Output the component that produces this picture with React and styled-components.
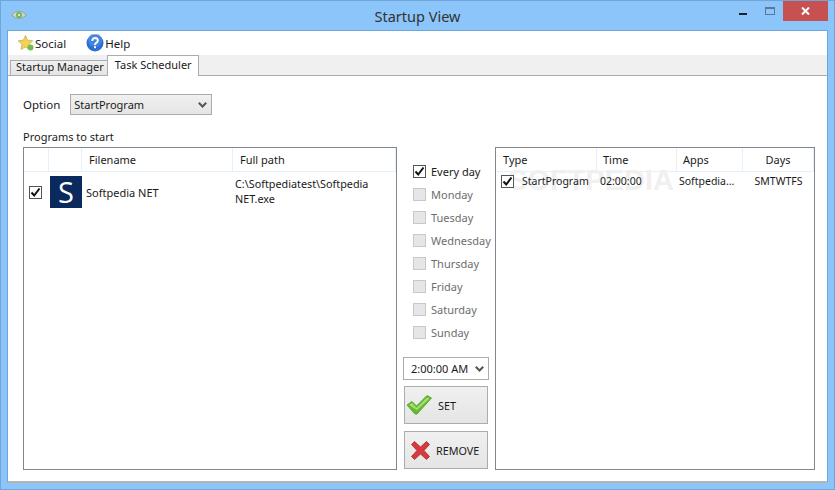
import { createGlobalStyle, styled } from "styled-components";

const GlobalStyle = createGlobalStyle`
	html, body {
		margin: 0;
		padding: 0;
		width: 835px;
		height: 490px;
		overflow: hidden;
		font-family: "Noto Sans", "Open Sans", sans-serif;
		font-size: 11.5px;
		color: #1a1a1a;
	}
`;

const Window = styled.div`
	box-sizing: border-box;
	width: 835px;
	height: 490px;
	display: flex;
	flex-direction: column;
	background: #8cc5f9;
	border: 1px solid #6fa5d8;
	padding: 0 6px 6px 6px;
`;

const TitleBar = styled.div`
	height: 29px;
	flex: none;
	display: flex;
	align-items: center;
	position: relative;
`;

const TitleText = styled.div`
	flex: 1;
	text-align: center;
	font-size: 14.5px;
	color: #333;
`;

const AppIcon = styled.svg`
	position: absolute;
	left: 4px;
	top: 8px;
`;

const WindowButtons = styled.div`
	position: absolute;
	right: 0;
	top: 0;
	display: flex;
	align-items: flex-start;
`;

const MinButton = styled.div`
	width: 8px;
	height: 2px;
	background: #222;
	margin: 12px 18px 0 0;
`;

const MaxButton = styled.div`
	box-sizing: border-box;
	width: 10px;
	height: 8px;
	border: 1px solid #5a7896;
	border-top-width: 2px;
	margin: 6px 8px 0 0;
`;

const CloseButton = styled.div`
	width: 45px;
	height: 20px;
	background: #c75050;
	display: flex;
	align-items: center;
	justify-content: center;
`;

const Client = styled.div`
	flex: 1;
	display: flex;
	flex-direction: column;
	background: #fff;
	border: 1px solid #6fa5d8;
	border-bottom: 2px solid #b5b5b5;
	min-height: 0;
`;

const MenuBar = styled.div`
	height: 24px;
	flex: none;
	display: flex;
	align-items: center;
	padding-left: 10px;
	gap: 20px;
	font-size: 11.5px;
`;

const MenuItem = styled.div`
	display: flex;
	align-items: center;
	gap: 1px;
`;

const TabStrip = styled.div`
	height: 21px;
	flex: none;
	display: flex;
	align-items: flex-end;
	background: #f0f0f0;
	padding-left: 2px;
	border-bottom: 1px solid #acacac;
	box-sizing: border-box;
`;

const Tab = styled.div`
	box-sizing: border-box;
	border: 1px solid #acacac;
	white-space: nowrap;
	font-size: 11px;
	margin-bottom: ${(p) => (p.$active ? "-1px" : "0")};
	height: ${(p) => (p.$active ? "21px" : "15px")};
	line-height: ${(p) => (p.$active ? "18px" : "12px")};
	padding: ${(p) => (p.$active ? "0 6px 0 7px" : "0 5px")};
	background: ${(p) => (p.$active ? "#fff" : "linear-gradient(#f0f0f0, #e5e5e5)")};
	border-bottom: none;
	margin-left: ${(p) => (p.$active ? "-3px" : "0")};
`;

const Page = styled.div`
	flex: 1;
	min-height: 0;
	display: flex;
	flex-direction: column;
	padding: 18px 11px 11px 15px;
`;

const OptionRow = styled.div`
	display: flex;
	align-items: center;
	gap: 10px;
	height: 21px;
`;

const Select = styled.div`
	box-sizing: border-box;
	display: flex;
	align-items: center;
	justify-content: space-between;
	width: ${(p) => p.$width}px;
	height: ${(p) => p.$height}px;
	border: 1px solid #acacac;
	background: ${(p) => (p.$plain ? "#fff" : "linear-gradient(#f0f0f0, #e5e5e5)")};
	padding: 0 4px 0 ${(p) => (p.$plain ? "7px" : "3px")};
	font-size: 11px;
`;

const SectionLabel = styled.div`
	margin-top: 14px;
	height: 16px;
	line-height: 16px;
	font-size: 11px;
`;

const Columns = styled.div`
	flex: 1;
	min-height: 0;
	display: flex;
	margin-top: 2px;
`;

const ListPanel = styled.div`
	box-sizing: border-box;
	width: ${(p) => p.$width}px;
	flex: none;
	border: 1px solid #828790;
	position: relative;
	overflow: hidden;
`;

const ListHeader = styled.div`
	display: flex;
	height: 24px;
	border-bottom: 1px solid #e5f0fa;
	box-sizing: border-box;
`;

const HeaderCell = styled.div`
	box-sizing: border-box;
	width: ${(p) => p.$width}px;
	flex: none;
	display: flex;
	align-items: center;
	justify-content: ${(p) => (p.$center ? "center" : "flex-start")};
	padding-left: ${(p) => p.$pad || 0}px;
	border-right: 1px solid #e5f0fa;
	font-size: 11px;
`;

const ProgramRow = styled.div`
	display: flex;
	height: 44px;
`;

const CheckCell = styled.div`
	width: 23px;
	flex: none;
	display: flex;
	align-items: flex-start;
	justify-content: center;
	padding-top: 14px;
	box-sizing: border-box;
`;

const Logo = styled.div`
	width: 32px;
	height: 32px;
	margin-top: 4px;
	margin-left: 3px;
	flex: none;
	background: #0a2a5e;
	color: #fff;
	display: flex;
	align-items: center;
	justify-content: center;
	font-family: "Open Sans", sans-serif;
	font-size: 29px;
	line-height: 32px;
`;

const ProgramName = styled.div`
	width: 153px;
	flex: none;
	padding: 13px 0 0 4px;
	box-sizing: border-box;
	font-size: 11px;
`;

const ProgramPath = styled.div`
	padding-top: 4px;
	font-size: 10.8px;
	line-height: 15px;
	width: 150px;
`;

const DayColumn = styled.div`
	width: 98px;
	flex: none;
	display: flex;
	flex-direction: column;
	align-items: flex-start;
	padding: 13px 0 0 6px;
	box-sizing: border-box;
`;

const DayRow = styled.div`
	display: flex;
	align-items: center;
	gap: 5px;
	height: 23px;
	margin-left: 10px;
	white-space: nowrap;
	font-size: 11px;
	color: ${(p) => (p.$disabled ? "#6d6d6d" : "#1a1a1a")};
`;

const Box = styled.div`
	box-sizing: border-box;
	width: 13px;
	height: 13px;
	flex: none;
	border: 1px solid ${(p) => (p.$disabled ? "#c8c8c8" : "#555")};
	background: ${(p) => (p.$disabled ? "#e6e6e6" : "#fff")};
	display: flex;
	align-items: center;
	justify-content: center;
`;

const TimeSelectWrap = styled.div`
	margin-top: 13px;
`;

const ActionButton = styled.div`
	box-sizing: border-box;
	width: 84px;
	height: 38px;
	margin: ${(p) => p.$top}px 0 0 1px;
	border: 1px solid #acacac;
	background: linear-gradient(#f0f0f0, #e5e5e5);
	display: flex;
	align-items: center;
	font-size: 10.8px;
	gap: ${(p) => p.$gap}px;
	padding-left: ${(p) => p.$pad}px;
`;

const Watermark = styled.div`
	position: absolute;
	left: 12px;
	top: 16px;
	font-size: 29px;
	font-weight: 700;
	color: #f0f0f0;
	font-family: "Liberation Sans", sans-serif;
`;

const TaskRow = styled.div`
	display: flex;
	height: 18px;
	align-items: center;
	position: relative;
	font-size: 10.5px;
`;

const TaskCell = styled.div`
	box-sizing: border-box;
	width: ${(p) => p.$width}px;
	flex: none;
	display: flex;
	align-items: center;
	gap: 8px;
	white-space: nowrap;
	justify-content: ${(p) => (p.$center ? "center" : "flex-start")};
	padding-left: ${(p) => p.$pad || 0}px;
`;

const Check = () => (
	<svg width="11" height="11" viewBox="0 0 11 11">
		<path d="M1.5 5.5 L4.2 8.5 L9.5 1.5" fill="none" stroke="#111" strokeWidth="2" />
	</svg>
);

const Chevron = () => (
	<svg width="9" height="6" viewBox="0 0 9 6">
		<path d="M0.8 0.8 L4.5 4.5 L8.2 0.8" fill="none" stroke="#555" strokeWidth="2" />
	</svg>
);

const days = ["Monday", "Tuesday", "Wednesday", "Thursday", "Friday", "Saturday", "Sunday"];

export default function App() {
	return (
		<>
			<GlobalStyle />
			<Window>
				<TitleBar>
					<AppIcon width="16" height="12" viewBox="0 0 16 12">
						<path d="M0.5 6 Q8 -2 15.5 6 Q8 13 0.5 6 Z" fill="#c9d8c8" stroke="#8aa49a" />
						<circle cx="8" cy="6" r="3" fill="#6fb35c" />
						<circle cx="8" cy="6" r="1.2" fill="#d8efc8" />
					</AppIcon>
					<TitleText>Startup View</TitleText>
					<WindowButtons>
						<MinButton />
						<MaxButton />
						<CloseButton>
							<svg width="9" height="8" viewBox="0 0 9 8">
								<path d="M1 0.5 L8 7.5 M8 0.5 L1 7.5" stroke="#fff" strokeWidth="2" />
							</svg>
						</CloseButton>
					</WindowButtons>
				</TitleBar>
				<Client>
					<MenuBar>
						<MenuItem>
							<svg width="16" height="16" viewBox="0 0 16 16">
								<path d="M7.5 0.5 L9.6 5.2 L14.8 5.8 L11 9.3 L12 14.5 L7.5 12 L3 14.5 L4 9.3 L0.2 5.8 L5.4 5.2 Z" fill="#f3d25c" stroke="#c9a640" strokeWidth="0.7" />
								<circle cx="12.5" cy="12.5" r="3" fill="#6cc04a" />
							</svg>
							Social
						</MenuItem>
						<MenuItem>
							<svg width="18" height="18" viewBox="0 0 18 18">
								<circle cx="9" cy="9" r="8.5" fill="#2b6fd0" />
								<circle cx="9" cy="6" r="7" fill="#5b9af0" opacity="0.5" />
								<path d="M6.2 7 Q6.4 4 9.2 4 Q12 4.2 11.8 6.6 Q11.6 8 10 9 Q9 9.7 9 11" fill="none" stroke="#fff" strokeWidth="2" />
								<rect x="8" y="12.2" width="2" height="2" fill="#fff" />
							</svg>
							Help
						</MenuItem>
					</MenuBar>
					<TabStrip>
						<Tab>Startup Manager</Tab>
						<Tab $active>Task Scheduler</Tab>
					</TabStrip>
					<Page>
						<OptionRow>
							<span>Option</span>
							<Select $width={142} $height={21}>
								StartProgram
								<Chevron />
							</Select>
						</OptionRow>
						<SectionLabel>Programs to start</SectionLabel>
						<Columns>
							<ListPanel $width={374}>
								<ListHeader>
									<HeaderCell $width={25} />
									<HeaderCell $width={33} />
									<HeaderCell $width={151} $pad={7}>Filename</HeaderCell>
									<HeaderCell $width={163} $pad={7}>Full path</HeaderCell>
								</ListHeader>
								<ProgramRow>
									<CheckCell>
										<Box><Check /></Box>
									</CheckCell>
									<Logo>S</Logo>
									<ProgramName>Softpedia NET</ProgramName>
									<ProgramPath>C:\Softpediatest\Softpedia NET.exe</ProgramPath>
								</ProgramRow>
							</ListPanel>
							<DayColumn>
								<DayRow>
									<Box><Check /></Box>
									Every day
								</DayRow>
								{days.map((day) => (
									<DayRow key={day} $disabled>
										<Box $disabled />
										{day}
									</DayRow>
								))}
								<TimeSelectWrap>
									<Select $plain $width={86} $height={23}>
										2:00:00 AM
										<Chevron />
									</Select>
								</TimeSelectWrap>
								<ActionButton $top={6} $gap={6} $pad={1}>
									<svg width="26" height="22" viewBox="0 0 26 22">
										<path d="M1 11 L6 7.5 L10.5 12 L21 1.5 L25.5 4 L11 20 Q9 20.5 8 19 Z" fill="#66bb33" stroke="#4d9a26" strokeWidth="0.8" />
										<path d="M3 11 L6 9 L10.5 14 L21 3.5 L23.5 4.5 L11 16 Z" fill="#a8e070" />
									</svg>
									SET
								</ActionButton>
								<ActionButton $top={7} $gap={6} $pad={6}>
									<svg width="19" height="19" viewBox="0 0 19 19">
										<path d="M0.5 3.5 L3.5 0.5 L9.5 6 L15.5 0.5 L18.5 3.5 L13 9.5 L18.5 15.5 L15.5 18.5 L9.5 13 L3.5 18.5 L0.5 15.5 L6 9.5 Z" fill="#d8393f" stroke="#a52a2a" strokeWidth="0.8" />
									</svg>
									REMOVE
								</ActionButton>
							</DayColumn>
							<ListPanel $width={320}>
								<Watermark>SOFTPEDIA</Watermark>
								<ListHeader>
									<HeaderCell $width={101} $pad={7}>Type</HeaderCell>
									<HeaderCell $width={80} $pad={6}>Time</HeaderCell>
									<HeaderCell $width={66} $pad={6}>Apps</HeaderCell>
									<HeaderCell $width={71} $center>Days</HeaderCell>
								</ListHeader>
								<TaskRow>
									<TaskCell $width={101} $pad={5}>
										<Box><Check /></Box>
										StartProgram
									</TaskCell>
									<TaskCell $width={80} $pad={3}>02:00:00</TaskCell>
									<TaskCell $width={66} $pad={2}>Softpedia...</TaskCell>
									<TaskCell $width={71} $center>SMTWTFS</TaskCell>
								</TaskRow>
							</ListPanel>
						</Columns>
					</Page>
				</Client>
			</Window>
		</>
	);
}
